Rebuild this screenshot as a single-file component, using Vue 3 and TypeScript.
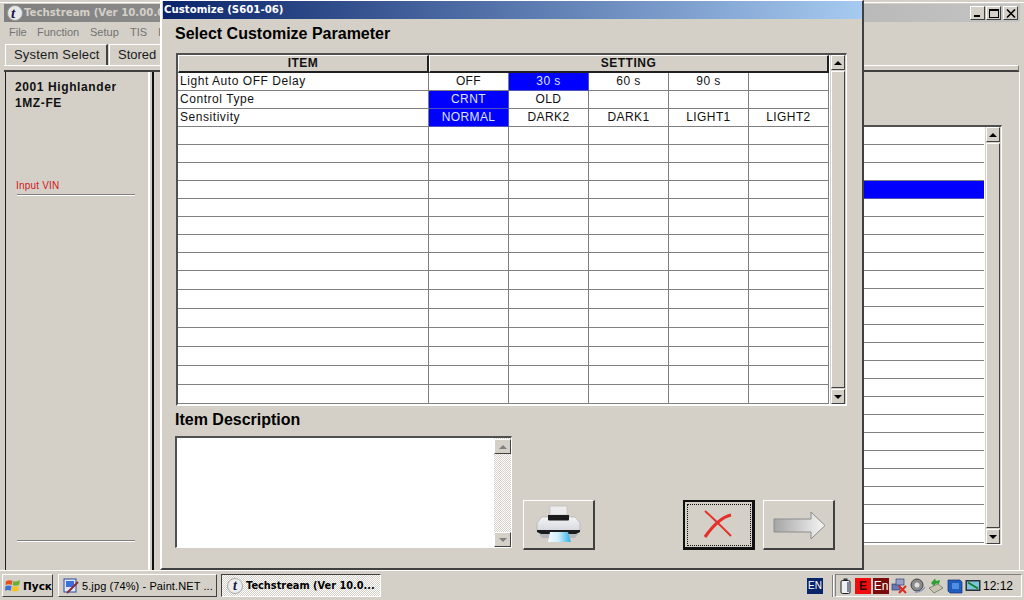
<script setup lang="ts">
interface Cell { text: string; selected?: boolean }
interface Row { label: string; cells: Cell[]; height: number }

const filled: Array<[string, Cell[]]> = [
  ['Light Auto OFF Delay', [{ text: 'OFF' }, { text: '30 s', selected: true }, { text: '60 s' }, { text: '90 s' }, { text: '' }]],
  ['Control Type', [{ text: 'CRNT', selected: true }, { text: 'OLD' }, { text: '' }, { text: '' }, { text: '' }]],
  ['Sensitivity', [{ text: 'NORMAL', selected: true }, { text: 'DARK2' }, { text: 'DARK1' }, { text: 'LIGHT1' }, { text: 'LIGHT2' }]],
]
const emptyCells: Cell[] = [{ text: '' }, { text: '' }, { text: '' }, { text: '' }, { text: '' }]

const rows: Row[] = Array.from({ length: 18 }, (_, i) => ({
  label: filled[i]?.[0] ?? '',
  cells: filled[i]?.[1] ?? emptyCells,
  height: i >= 11 ? 19 : 18,
}))

const listRows = Array.from({ length: 23 }, (_, i) => ({
  id: i,
  selected: i === 3,
  height: i >= 21 ? 19 : 18,
}))
</script>

<template>
  <div class="desktop">
    <div class="workspace">
      <section class="main-window">
        <header class="main-title">
          <svg class="logo" width="18" height="18" viewBox="0 0 18 18"><circle cx="9" cy="9" r="7.5" fill="#e8e8e8" stroke="#9a9a9a" /></svg>
          <span class="logo-t">t</span>
          <span class="main-title-text">Techstream (Ver 10.00.0</span>
          <div class="caption-buttons">
            <span class="caption-btn"><i class="min-glyph"></i></span>
            <span class="caption-btn"><i class="max-glyph"></i></span>
            <span class="caption-btn close-btn">
              <svg width="10" height="9" viewBox="0 0 10 9"><path d="M1 0.5 L9 8.5 M9 0.5 L1 8.5" stroke="#000" stroke-width="1.6" /></svg>
            </span>
          </div>
        </header>
        <nav class="menu">
          <span class="menu-file">File</span>
          <span class="menu-function">Function</span>
          <span class="menu-setup">Setup</span>
          <span class="menu-tis">TIS</span>
          <span class="menu-last">I</span>
        </nav>
        <div class="tabs">
          <span class="tab tab-system">System Select</span>
          <span class="tab tab-stored">Stored</span>
        </div>
        <div class="tab-line"></div>
        <div class="main-body">
          <aside class="side">
            <div class="vehicle">2001 Highlander<br />1MZ-FE</div>
            <div class="vin">Input VIN</div>
            <div class="vin-rule"></div>
            <div class="side-spacer"></div>
            <div class="side-rule"></div>
          </aside>
          <div class="center">
            <div class="list-frame">
              <div class="list-rows">
                <div
                  v-for="r in listRows"
                  :key="r.id"
                  class="list-row"
                  :class="{ 'list-selected': r.selected }"
                  :style="{ height: r.height + 'px' }"
                ></div>
              </div>
              <div class="scrollbar">
                <span class="sb-btn"><i class="arrow-up"></i></span>
                <span class="sb-thumb"></span>
                <span class="sb-btn"><i class="arrow-down"></i></span>
              </div>
            </div>
          </div>
        </div>
      </section>

      <section class="dialog">
        <header class="dialog-title">Customize (S601-06)</header>
        <div class="dialog-body">
          <h2 class="heading param-heading">Select Customize Parameter</h2>
          <div class="table-frame">
            <div class="table-main">
              <div class="table-head">
                <div class="head-cell head-item">ITEM</div>
                <div class="head-cell head-setting">SETTING</div>
              </div>
              <div v-for="(row, i) in rows" :key="i" class="table-row" :style="{ height: row.height + 'px' }">
                <div class="cell cell-item">{{ row.label }}</div>
                <div
                  v-for="(c, j) in row.cells"
                  :key="j"
                  class="cell cell-value"
                  :class="{ selected: c.selected }"
                >{{ c.text }}</div>
              </div>
            </div>
            <div class="scrollbar">
              <span class="sb-btn"><i class="arrow-up"></i></span>
              <span class="sb-thumb"></span>
              <span class="sb-btn"><i class="arrow-down"></i></span>
            </div>
          </div>
          <div class="lower">
            <div class="desc-col">
              <h2 class="heading desc-heading">Item Description</h2>
              <div class="desc-box">
                <div class="desc-text"></div>
                <div class="scrollbar dither">
                  <span class="sb-btn"><i class="arrow-up disabled"></i></span>
                  <span class="sb-gap"></span>
                  <span class="sb-btn"><i class="arrow-down disabled"></i></span>
                </div>
              </div>
            </div>
            <button class="action print" type="button" aria-label="Print">
              <svg width="58" height="44" viewBox="0 0 58 44">
                <defs>
                  <linearGradient id="paperGrad" x1="0" x2="1" y1="0" y2="0">
                    <stop offset="0" stop-color="#f4fbff" />
                    <stop offset="0.45" stop-color="#cfeefb" />
                    <stop offset="1" stop-color="#2fb0e6" />
                  </linearGradient>
                  <linearGradient id="bodyGrad" x1="0" x2="0" y1="0" y2="1">
                    <stop offset="0" stop-color="#f4f4f6" />
                    <stop offset="1" stop-color="#d6d8de" />
                  </linearGradient>
                </defs>
                <path d="M20 3 H37 V12 H20 Z" fill="#ececec" stroke="#bbb" stroke-width="0.6" />
                <path d="M12 14 H45 L50 20 V28 H7 V20 Z" fill="url(#bodyGrad)" stroke="#a9a9ad" stroke-width="0.6" />
                <path d="M18 12 H39 V16.5 Q39 17.5 38 17.5 H19 Q18 17.5 18 16.5 Z" fill="#1b1b1d" />
                <path d="M7 27 H50 V29 L46 31 H11 L7 29 Z" fill="#1c1c1e" />
                <path d="M9 31 H48 L45 35 H12 Z" fill="#b5b7bc" />
                <path d="M20 29 H38 L41 39 H18 Z" fill="url(#paperGrad)" />
              </svg>
            </button>
            <div class="lower-spacer"></div>
            <button class="action cancel" type="button" aria-label="Cancel">
              <span class="focus-ring">
                <svg width="32" height="32" viewBox="0 0 32 32">
                  <path d="M2 2 C9 8 20 19 28 27" fill="none" stroke="#e4312b" stroke-width="2" />
                  <path d="M28 6 C19 8 9 18 2 28" fill="none" stroke="#e4312b" stroke-width="3.2" />
                </svg>
              </span>
            </button>
            <button class="action next" type="button" aria-label="Next">
              <svg width="54" height="30" viewBox="0 0 54 30">
                <defs>
                  <linearGradient id="arrowGrad" x1="0" x2="1" y1="0" y2="0">
                    <stop offset="0" stop-color="#a5a5a5" />
                    <stop offset="1" stop-color="#f6f6f6" />
                  </linearGradient>
                </defs>
                <path d="M2 9 H39 V2 L53 15.5 L39 29 V22 H2 Z" fill="url(#arrowGrad)" stroke="#8c8c8c" stroke-width="1" />
              </svg>
            </button>
          </div>
        </div>
      </section>
    </div>

    <footer class="taskbar">
      <button class="start" type="button">
        <svg width="17" height="17" viewBox="0 0 17 17">
          <path d="M1 4 Q4 2 8 3.5 L7 8 Q4 6.5 0.5 8 Z" fill="#e2521d" />
          <path d="M9 3.6 Q12 5 16 3 L15 7.8 Q11.5 9.5 8 8 Z" fill="#6aaf2e" />
          <path d="M0.5 9 Q4 7.8 7 9 L6 14 Q3 12.5 0 14 Z" fill="#3c6fd0" />
          <path d="M8 9 Q11.5 10.5 15 9 L14 14 Q10.5 15.5 7 14 Z" fill="#f5c31d" />
        </svg>
        <span>Пуск</span>
      </button>
      <div class="task-sep"></div>
      <div class="task task-paint">
        <svg class="task-icon" width="16" height="16" viewBox="0 0 16 16">
          <rect x="1" y="1" width="12" height="13" fill="#dfe8f7" stroke="#2a4a9a" />
          <rect x="3" y="3" width="8" height="6" fill="#3d6fd8" />
          <path d="M4 15 L15 4" stroke="#8a2b3a" stroke-width="2" />
        </svg>
        <span>5.jpg (74%) - Paint.NET ...</span>
      </div>
      <div class="task task-active">
        <span class="task-logo">t</span>
        <span>Techstream (Ver 10.0...</span>
      </div>
      <div class="task-spacer"></div>
      <span class="lang">EN</span>
      <div class="tray-handle"></div>
      <div class="tray">
        <svg class="tray-icon" width="11" height="16" viewBox="0 0 11 16"><rect x="3.5" y="0.5" width="4" height="2" fill="#333" /><rect x="1" y="2.5" width="9" height="13" rx="1.5" fill="#eef0f4" stroke="#222" /><rect x="7" y="4" width="2" height="10" fill="#7d88a0" /></svg>
        <span class="tray-box tray-e">E</span>
        <span class="tray-box tray-en">En</span>
        <svg class="tray-icon" width="17" height="16" viewBox="0 0 17 16"><rect x="1" y="6" width="8" height="6" fill="#6a78b4" stroke="#24305f" stroke-width="0.6" /><rect x="5" y="1" width="8" height="6" fill="#9aa2c8" stroke="#24305f" stroke-width="0.6" /><path d="M8 8 L15 15 M15 8 L8 15" stroke="#e02a20" stroke-width="2" /></svg>
        <svg class="tray-icon" width="16" height="16" viewBox="0 0 16 16"><circle cx="7" cy="7" r="6" fill="#8a8a8a" stroke="#444" /><circle cx="7" cy="7" r="2.5" fill="#e0e0e0" /><path d="M5 14 Q11 15 15 9" stroke="#8090c0" stroke-width="1.3" fill="none" /></svg>
        <svg class="tray-icon" width="17" height="16" viewBox="0 0 17 16"><path d="M1 10 L10 6 L15 10 L6 15 Z" fill="#c9c4b0" stroke="#555" stroke-width="0.6" /><path d="M3 5 L7 0.5 L8 3 L12 2 L11 6 L8 5.5 L6 8 Z" fill="#2fa02f" /></svg>
        <svg class="tray-icon" width="16" height="16" viewBox="0 0 16 16"><path d="M1 2 H13 L15 4 V15 H3 L1 13 Z" fill="#1f5cc0" stroke="#12306c" stroke-width="0.7" /><rect x="5" y="5" width="7" height="6" fill="#4f8ee0" /></svg>
        <svg class="tray-icon" width="16" height="14" viewBox="0 0 16 14"><rect x="0.5" y="1" width="15" height="11" fill="#2a2f3a" /><rect x="2" y="2.5" width="12" height="8" fill="#7ac6d8" /><path d="M3 3.5 L13 9.5" stroke="#157a2c" stroke-width="1.6" /></svg>
        <span class="clock">12:12</span>
      </div>
    </footer>
  </div>
</template>

<style>
html, body { margin: 0; padding: 0; background: #d4d0c8; }
</style>

<style scoped>
.desktop {
  width: 1024px;
  height: 600px;
  overflow: hidden;
  display: flex;
  flex-direction: column;
  background: #d4d0c8;
  font-family: "Liberation Sans", Arial, sans-serif;
  color: #000;
}
.workspace { position: relative; height: 570px; flex: none; }

/* main window behind the dialog */
.main-window {
  position: absolute;
  inset: 0;
  box-sizing: border-box;
  padding: 4px 1px 0 4px;
  background: linear-gradient(#d4d0c8 0 2px, #fff 2px 3px, #d4d0c8 3px);
  display: flex;
  flex-direction: column;
}
.main-title {
  flex: none;
  height: 18px;
  width: 1016px;
  display: flex;
  align-items: center;
  position: relative;
  background: linear-gradient(90deg, #808080, #c4c4c4);
}
.logo { flex: none; margin-left: 2px; }
.logo-t {
  position: absolute;
  left: 7px;
  top: 0;
  font: italic bold 15px/18px "Liberation Serif", serif;
  color: #17174a;
}
.main-title-text {
  font: bold 10.2px/18px "DejaVu Sans", sans-serif;
  color: #d4d0c8;
  white-space: nowrap;
}
.caption-buttons { margin-left: auto; display: flex; gap: 1px; margin-right: 2px; }
.caption-btn {
  box-sizing: border-box;
  width: 15px;
  height: 14px;
  display: flex;
  align-items: center;
  justify-content: center;
  background: #d4d0c8;
  border: 1px solid;
  border-color: #fff #404040 #404040 #fff;
  position: relative;
}
.close-btn { margin-left: 1px; }
.min-glyph { position: absolute; left: 3px; bottom: 2px; width: 6px; height: 2px; background: #000; }
.max-glyph { box-sizing: border-box; width: 10px; height: 9px; border: 1px solid #000; border-top-width: 2px; }

.menu {
  flex: none;
  height: 20px;
  display: flex;
  align-items: center;
  padding-left: 5px;
  font-size: 11px;
  color: #727272;
  overflow: hidden;
}
.menu span { white-space: nowrap; }
.menu-file { width: 28px; }
.menu-function { width: 53px; }
.menu-setup { width: 40px; }
.menu-tis { width: 28px; }
.menu-last { width: 3px; }

.tabs { flex: none; height: 21px; margin-top: 2px; padding-left: 1px; display: flex; }
.tab {
  box-sizing: border-box;
  height: 21px;
  padding: 0 8px;
  border-top: 1px solid #fff;
  border-left: 1px solid #fff;
  border-right: 2px solid #404040;
  font-size: 13px;
  line-height: 20px;
  letter-spacing: 0.2px;
  color: #1a1a1a;
  white-space: nowrap;
}
.tab-system { width: 103px; margin-right: 1px; }
.tab-stored { letter-spacing: 0; }
.tab-line {
  flex: none;
  box-sizing: border-box;
  height: 7px;
  width: 1015px;
  border-top: 1px solid #fff;
  border-bottom: 2px solid #404040;
  border-right: 1px solid #808080;
}
.main-body { flex: 1; min-height: 0; display: flex; }
.side {
  flex: none;
  box-sizing: border-box;
  width: 145px;
  margin-left: 1px;
  padding: 7px 13px 29px 9px;
  border-left: 1px solid #202020;
  border-right: 2px solid #fff;
  display: flex;
  flex-direction: column;
}
.vehicle { font-weight: bold; font-size: 12px; line-height: 16px; letter-spacing: 0.6px; color: #111; }
.vin { margin-top: 69px; margin-left: 1px; font-size: 10px; line-height: 12px; color: #d01818; letter-spacing: 0.2px; }
.vin-rule, .side-rule { height: 1px; background: #808080; margin-left: 2px; margin-top: 2px; box-shadow: 0 1px 0 #fff; }
.side-spacer { flex: 1; }
.center {
  flex: none;
  box-sizing: border-box;
  width: 868px;
  margin-left: 2px;
  height: 498px;
  padding: 53px 0 0 16px;
  border-left: 2px solid #101010;
  border-right: 1px solid #fff;
}
.list-frame {
  box-sizing: border-box;
  width: 832px;
  height: 420px;
  display: flex;
  border-top: 2px solid #505050;
  border-left: 2px solid #505050;
  border-right: 1px solid #fff;
  border-bottom: 1px solid #fff;
}
.list-rows { flex: 1; min-width: 0; background: #fff; }
.list-row { box-sizing: border-box; border-bottom: 1px solid #808080; }
.list-selected { background: #0000ff; border-bottom-color: #5050c0; }

/* scrollbar */
.scrollbar {
  flex: none;
  box-sizing: border-box;
  width: 17px;
  padding: 0 1px;
  display: flex;
  flex-direction: column;
  background: #d4d0c8;
  border-left: 1px solid #fff;
}
.sb-btn {
  flex: none;
  box-sizing: border-box;
  height: 15px;
  display: flex;
  align-items: center;
  justify-content: center;
  background: #d4d0c8;
  border: 1px solid;
  border-color: #fff #404040 #404040 #fff;
}
.sb-thumb {
  flex: 1;
  box-sizing: border-box;
  background: #d4d0c8;
  border: 1px solid;
  border-color: #fff #404040 #404040 #fff;
  margin: 1px 0;
}
.sb-gap { flex: 1; }
.arrow-up { width: 0; height: 0; border: 4px solid transparent; border-top: 0; border-bottom: 4px solid #000; }
.arrow-down { width: 0; height: 0; border: 4px solid transparent; border-bottom: 0; border-top: 4px solid #000; }
.arrow-up.disabled { border-bottom-color: #808080; }
.arrow-down.disabled { border-top-color: #808080; }
.dither { background: repeating-conic-gradient(#fff 0 25%, #d4d0c8 0 50%) 0 0 / 2px 2px; padding: 1px 0 0; border-left: 0; }

/* dialog */
.dialog {
  position: absolute;
  left: 160px;
  top: 0;
  width: 704px;
  height: 570px;
  box-sizing: border-box;
  background: #d4d0c8;
  border-left: 2px solid #fff;
  border-top: 1px solid #fff;
  border-right: 2px solid #404040;
  border-bottom: 2px solid #404040;
  display: flex;
  flex-direction: column;
}
.dialog-title {
  flex: none;
  height: 18px;
  margin-left: 1px;
  padding-left: 1px;
  font: bold 10.2px/18px "DejaVu Sans", sans-serif;
  color: #fff;
  background: linear-gradient(90deg, #0a246a, #a6caf0);
}
.dialog-body { flex: 1; min-height: 0; padding: 0 0 0 14px; display: flex; flex-direction: column; }
.heading { margin: 0; font-size: 16px; font-weight: bold; line-height: 20px; color: #000; }
.param-heading { margin: 5px 0 0 -1px; height: 20px; }
.table-frame {
  margin-top: 9px;
  box-sizing: border-box;
  width: 671px;
  height: 353px;
  display: flex;
  border-top: 2px solid #505050;
  border-left: 2px solid #505050;
  border-right: 1px solid #fff;
  border-bottom: 2px solid #fff;
}
.table-main { flex: none; width: 651px; background: #fff; }
.table-head { display: flex; height: 18px; background: #d4d0c8; }
.head-cell {
  box-sizing: border-box;
  border-top: 1px solid #fff;
  border-left: 1px solid #fff;
  border-bottom: 2px solid #202020;
  border-right: 2px solid #202020;
  font-size: 12px;
  font-weight: bold;
  line-height: 15px;
  letter-spacing: 0.5px;
  text-align: center;
  color: #111;
}
.head-item { width: 251px; }
.head-setting { width: 400px; }
.table-row { display: flex; box-sizing: border-box; }
.cell {
  box-sizing: border-box;
  border-right: 1px solid #808080;
  border-bottom: 1px solid #808080;
  font-size: 12px;
  line-height: 17px;
  letter-spacing: 0.55px;
  white-space: nowrap;
  overflow: hidden;
  color: #111;
}
.cell-item { width: 251px; padding-left: 2px; }
.cell-value { width: 80px; text-align: center; letter-spacing: 0.4px; }
.selected { background: #0000ff; color: #dfe4ff; border-color: #5050c0; }

.lower { flex: none; height: 142px; display: flex; align-items: flex-end; }
.desc-col { flex: none; width: 337px; display: flex; flex-direction: column; margin-left: -1px; }
.desc-heading { margin: 0 0 6px; line-height: 20px; }
.desc-box {
  box-sizing: border-box;
  height: 112px;
  display: flex;
  border-top: 2px solid #505050;
  border-left: 2px solid #505050;
  border-right: 1px solid #fff;
  border-bottom: 1px solid #fff;
}
.desc-text { flex: 1; background: #fff; }
.action {
  box-sizing: border-box;
  flex: none;
  width: 72px;
  height: 50px;
  padding: 0;
  display: flex;
  align-items: center;
  justify-content: center;
  background: #d4d0c8;
  border: 1px solid;
  border-color: #fff #404040 #404040 #fff;
  border-right-width: 2px;
  border-bottom-width: 2px;
  margin-bottom: -2px;
}
.print { margin-left: 11px; }
.lower-spacer { flex: none; width: 88px; }
.cancel { border: 2px solid #101010; border-bottom-width: 3px; border-right-width: 3px; }
.focus-ring {
  box-sizing: border-box;
  width: 64px;
  height: 42px;
  border: 1px dotted #111;
  display: flex;
  align-items: center;
  justify-content: center;
}
.next { margin-left: 8px; }

/* taskbar */
.taskbar {
  flex: none;
  box-sizing: border-box;
  height: 30px;
  padding: 3px 2px;
  border-top: 1px solid #fff;
  display: flex;
  align-items: center;
  font-size: 11px;
  background: #d4d0c8;
}
.start {
  box-sizing: border-box;
  width: 51px;
  height: 23px;
  padding: 0 0 0 2px;
  display: flex;
  align-items: center;
  gap: 2px;
  background: #d4d0c8;
  border: 1px solid;
  border-color: #fff #404040 #404040 #fff;
  font: bold 10.5px "DejaVu Sans", sans-serif;
  color: #000;
}
.task-sep { width: 5px; }
.task {
  box-sizing: border-box;
  height: 23px;
  display: flex;
  align-items: center;
  white-space: nowrap;
  overflow: hidden;
}
.task-icon { flex: none; }
.task-paint {
  width: 159px;
  padding-left: 4px;
  margin-right: 4px;
  gap: 3px;
  border: 1px solid;
  border-color: #fff #404040 #404040 #fff;
  font-size: 11px;
  letter-spacing: 0.1px;
}
.task-active {
  width: 160px;
  padding-left: 5px;
  gap: 3px;
  border: 1px solid;
  border-color: #404040 #fff #fff #404040;
  background: repeating-conic-gradient(#fff 0 25%, #d4d0c8 0 50%) 0 0 / 2px 2px;
  font: bold 9.8px "DejaVu Sans", sans-serif;
}
.task-logo {
  flex: none;
  width: 16px;
  height: 16px;
  border-radius: 50%;
  background: #ececec;
  border: 1px solid #aaa;
  box-sizing: border-box;
  text-align: center;
  font: italic bold 14px/14px "Liberation Serif", serif;
  color: #17174a;
}
.task-spacer { flex: 1; }
.lang {
  width: 16px;
  height: 16px;
  background: #0a246a;
  color: #fff;
  font-size: 10px;
  line-height: 16px;
  text-align: center;
  margin-right: 9px;
}
.tray-handle { width: 1px; height: 22px; background: #808080; box-shadow: 1px 0 0 #fff; margin-right: 2px; }
.tray {
  box-sizing: border-box;
  width: 187px;
  height: 23px;
  padding: 0 8px 0 4px;
  display: flex;
  align-items: center;
  gap: 2px;
  border: 1px solid;
  border-color: #808080 #fff #fff #808080;
}
.tray-icon { flex: none; }
.tray-box { flex: none; width: 16px; height: 16px; text-align: center; font-size: 12px; line-height: 16px; }
.tray-e { margin-left: 2px; background: #f20d0d; color: #300; font-weight: bold; }
.tray-en { background: #7a0c0c; color: #fff; }
.clock { margin-left: auto; font-size: 12px; letter-spacing: 0; }
</style>
